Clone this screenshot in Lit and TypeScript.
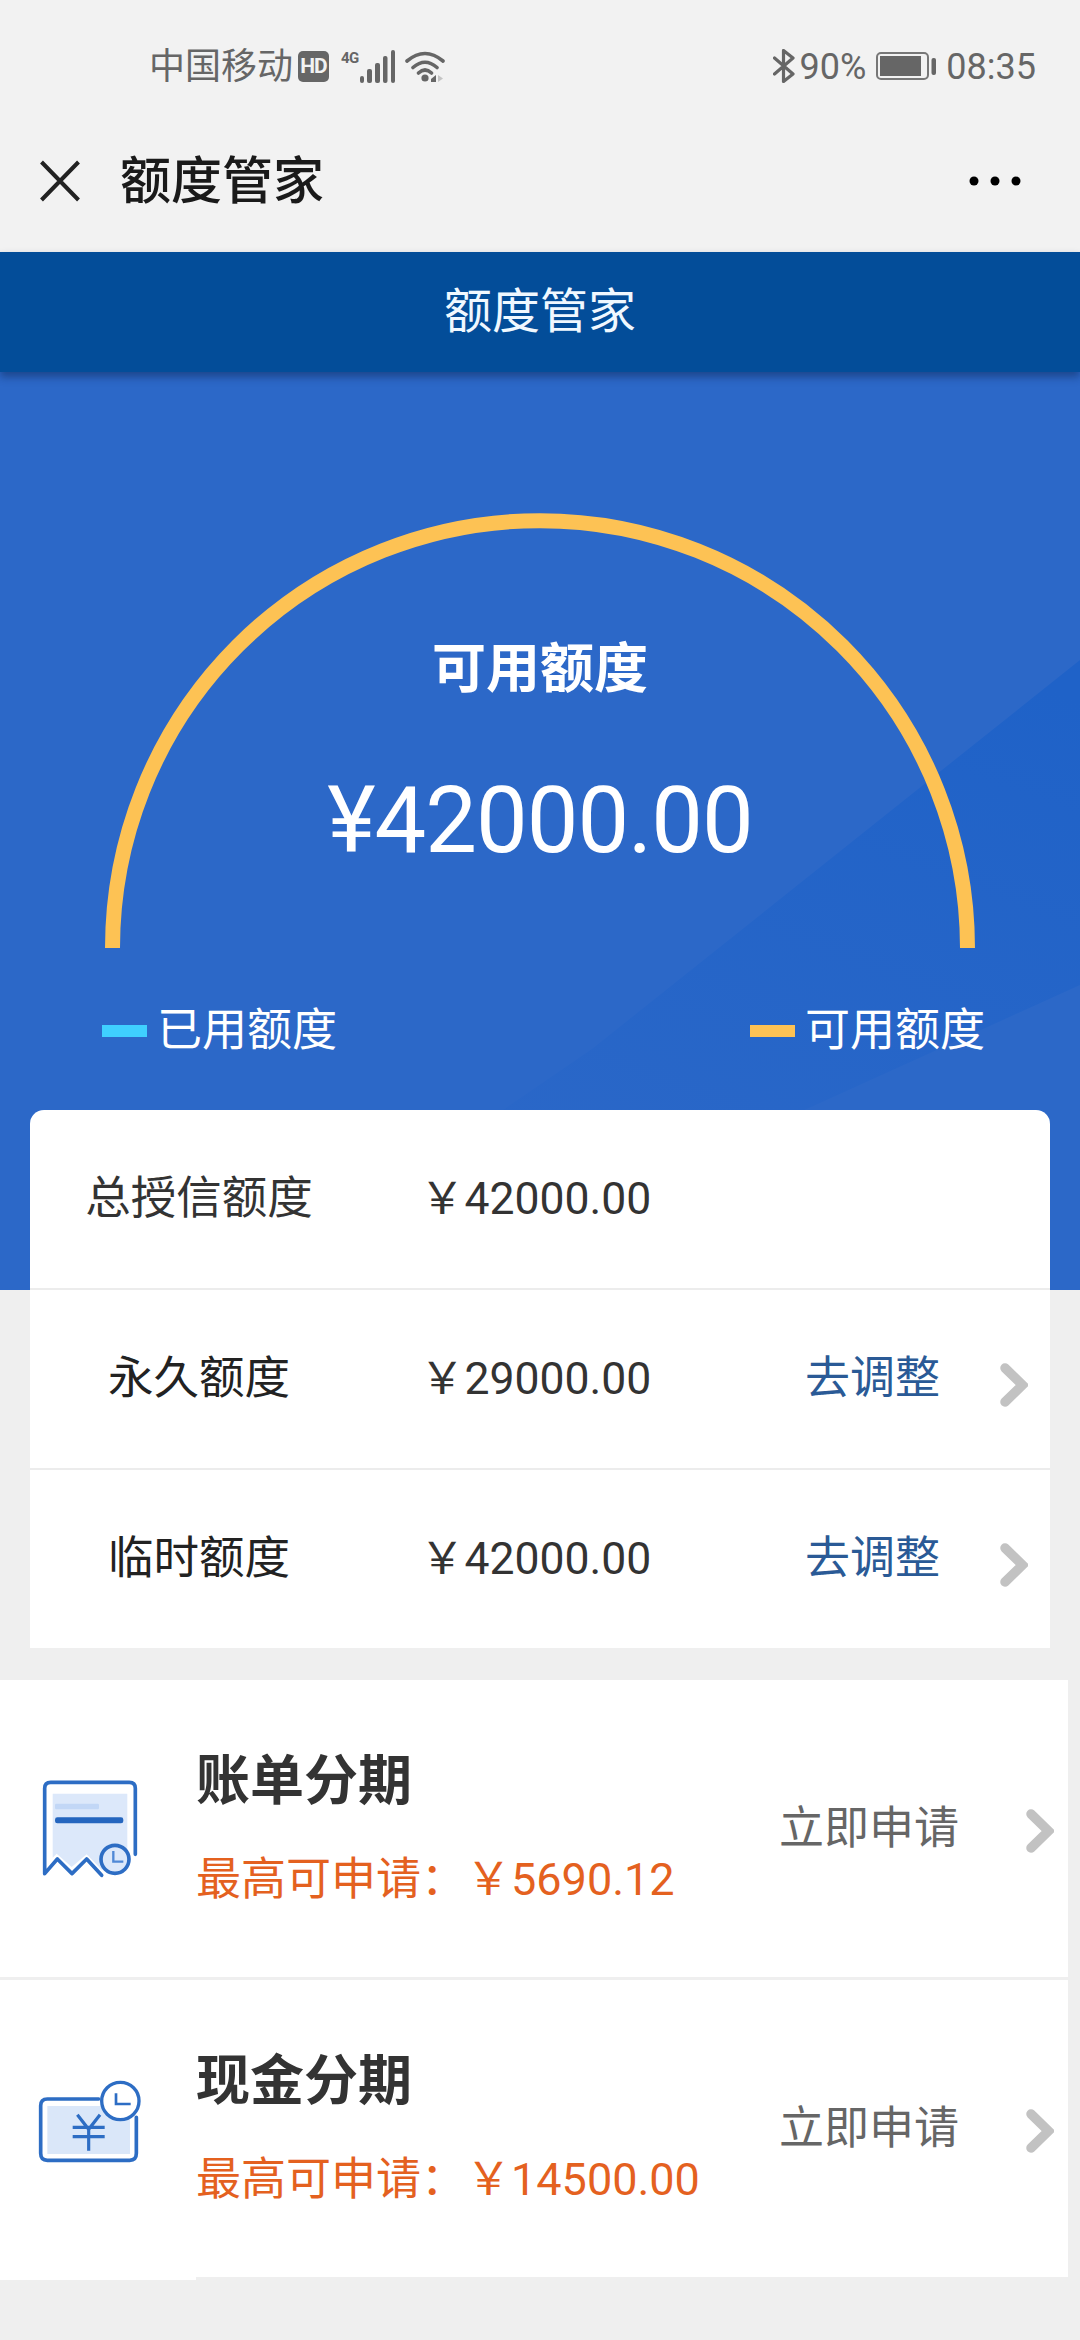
import { LitElement, html, css, svg } from "lit";
import { customElement } from "lit/decorators.js";

const chevron = html`<svg class="chev" viewBox="0 0 28 44" width="28" height="44"><path d="M5 5 L22.500 22 L5 39" fill="none" stroke="#c2c2c2" stroke-width="9.500" stroke-linecap="round" stroke-linejoin="miter"/></svg>`;

const billIcon = html`<svg class="i-bill" viewBox="120 170 300 310" width="100" height="103.3">
  <path d="M158 220 H382 V385 L345 440 L305 448 L260 402 L215 440 L170 400 L158 412 Z" fill="#dce8fa"/>
  <rect x="165" y="250" width="132" height="17" rx="4" fill="#c2d7f6"/>
  <rect x="165" y="291" width="205" height="18" rx="7" fill="#2566bf"/>
  <path d="M406 402 V204 Q406 186 388 186 H152 Q134 186 134 204 V460 L172 416 L216 460 L260 416 L305 465" fill="none" stroke="#2d6dc4" stroke-width="11" stroke-linejoin="round" stroke-linecap="round"/>
  <circle cx="345" cy="417" r="42" fill="#dce8fa" stroke="#2d6dc4" stroke-width="11"/>
  <path d="M340 392 V424 H370" fill="none" stroke="#4f88d6" stroke-width="7"/>
</svg>`;

const cashIcon = html`<svg class="i-cash" viewBox="115 1075 320 255" width="106.7" height="85">
  <rect x="146" y="1156" width="248" height="144" fill="#dae7f9"/>
  <path d="M300 1135 H146 Q126 1135 126 1155 V1298 Q126 1319 146 1319 H393 Q413 1319 413 1298 V1190" fill="none" stroke="#2d6dc4" stroke-width="11" stroke-linecap="round"/>
  <circle cx="365" cy="1141" r="56" fill="#fff" stroke="#2d6dc4" stroke-width="10"/>
  <path d="M352 1118 V1150 H396" fill="none" stroke="#2d6dc4" stroke-width="8"/>
  <path d="M236 1182 L270 1226 L304 1182 M222 1220 H318 M222 1248 H318 M270 1226 V1290" fill="none" stroke="#2d6dc4" stroke-width="9.500"/>
</svg>`;

const signal = svg`<rect x="0" y="26" width="4" height="7" rx="2"/><rect x="7" y="19" width="5" height="14" rx="2"/><rect x="15" y="13" width="5" height="20" rx="2"/><rect x="23" y="6" width="4.500" height="27" rx="2"/><rect x="31" y="0" width="4" height="33" rx="2"/>`;

@customElement("app-root")
export class AppRoot extends LitElement {
  static styles = css`
    :host { display: block; width: 1080px; height: 2340px; background: #efefef; overflow: hidden;
      font-family: Roboto, "Noto Sans CJK SC", sans-serif; color: #333; }
    svg { display: block; flex: none; }

    .top { background: #f2f2f2; height: 252px; }
    .status { height: 132px; display: flex; justify-content: space-between; align-items: center; padding: 0 44px 0 149px; box-sizing: border-box; color: #666; }
    .group { display: flex; align-items: center; }
    .carrier { font-size: 36px; line-height: 44px; width: 144px; white-space: nowrap; margin-top: 2px; }
    .hd { width: 31px; height: 31px; margin-left: 5px; border-radius: 5px; background: #666; color: #f2f2f2; font-size: 21px; font-weight: 700; line-height: 31px; text-align: center; letter-spacing: -1px; }
    .net { width: 19px; height: 33px; margin-left: 12px; font-size: 15px; font-weight: 700; line-height: 17px; letter-spacing: -.5px; }
    .bars { fill: #666; margin-right: 10px; }
    .st-text { font-size: 36px; line-height: 40px; margin-top: 2px; }
    .pct { margin: 2px 10px 0 5px; }
    .time { margin-left: 9px; }

    .nav { height: 120px; padding: 0 59px 22px 40px; box-sizing: border-box; display: flex; align-items: center; color: #1a1a1a; }
    .nav-title { font-size: 51px; line-height: 60px; font-weight: 500; margin: 2px 0 0 40px; flex: 1; }

    .bar { position: relative; z-index: 1; height: 120px; background: #034d99; color: #f0f8ff; box-shadow: 0 5px 8px rgba(10, 30, 70, .45);
      display: flex; align-items: center; justify-content: center; font-size: 48px; font-weight: 400; padding-bottom: 10px; box-sizing: border-box; }

    .hero { position: relative; height: 918px; background: #2c68c8; overflow: hidden; color: #fff; padding-top: 141px; box-sizing: border-box; }
    .decor { position: absolute; inset: 0; clip-path: polygon(1080px 288px, 592px 677px, 500px 740px, 800px 740px, 1080px 613px); background: linear-gradient(200deg, #1f62c8 25%, #2c68c8 82%); }
    .gauge { position: relative; width: 870px; height: 435px; margin: 0 auto; display: grid; }
    .gauge > * { grid-area: 1 / 1; }
    .gauge-text { display: flex; flex-direction: column; align-items: center; padding-top: 122px; box-sizing: border-box; }
    .g-label { font-size: 54px; font-weight: 700; line-height: 70px; }
    .g-amount { font-size: 92px; letter-spacing: -1px; line-height: 110px; margin-top: 61px; }
    .legend { position: relative; display: flex; justify-content: space-between; margin-top: 53px; padding: 0 95px 0 102px; font-size: 45px; line-height: 60px; }
    .leg { display: flex; align-items: center; gap: 10px; }
    .sw { width: 45px; height: 12px; }

    .card { position: relative; margin: -180px 30px 0; background: #fff; border-radius: 14px 14px 0 0; }
    .row { height: 180px; box-sizing: border-box; border-bottom: 2px solid #ececec; display: flex; align-items: center; font-size: 45px; padding-bottom: 10px; }
    .row:last-child { height: 178px; border-bottom: 0; }
    .r-label { width: 338px; text-align: center; color: #222; font-size: 45.500px; }
    .r-label.total { color: #333; }
    .r-val { flex: 1; margin-left: 52px; color: #333; font-size: 44.500px; }
    .r-act { color: #2a5a96; }
    .row .chev { margin: 22px 22px 0 60px; }

    .apply { margin: 32px 12px 0 0; }
    .a-row { display: flex; height: 297px; }
    .a-row + .a-row { margin-top: 3px; height: 300px; }
    .a-icon { width: 196px; background: #fff; display: flex; align-items: center; padding-left: 40px; box-sizing: border-box; }
    .i-cash { margin: 0 0 18px -3px; }
    .a-main { flex: 1; background: #fff; display: flex; align-items: center; padding-right: 14px; }
    .a-row + .a-row .a-main { margin-bottom: 3px; }
    .a-text { flex: 1; align-self: flex-start; padding-top: 66px; }
    .a-title { font-size: 54px; font-weight: 700; line-height: 72px; color: #333; }
    .a-sub { font-size: 45px; line-height: 60px; margin-top: 32px; color: #e4611f; white-space: nowrap; }
    .a-act { font-size: 45px; color: #666; margin-bottom: 8px; }
    .a-main .chev { margin: 5px 0 0 67px; }
  `;

  private row(label: string, value: string, total = false) {
    return html`<div class="row">
      <div class="r-label ${total ? "total" : ""}">${label}</div>
      <div class="r-val">${value}</div>
      ${total ? "" : html`<div class="r-act">去调整</div>${chevron}`}
    </div>`;
  }

  private applyRow(icon: unknown, title: string, sub: string) {
    return html`<div class="a-row">
      <div class="a-icon">${icon}</div>
      <div class="a-main">
        <div class="a-text"><div class="a-title">${title}</div><div class="a-sub">最高可申请：${sub}</div></div>
        <div class="a-act">立即申请</div>${chevron}
      </div>
    </div>`;
  }

  render() {
    return html`
      <div class="top">
        <div class="status">
          <div class="group">
            <div class="carrier">中国移动</div>
            <div class="hd">HD</div>
            <div class="net">4G</div>
            <svg class="bars" viewBox="0 0 35 33" width="35" height="33">${signal}</svg>
            <svg viewBox="0 0 40 33" width="40" height="33">
              <path d="M2 11 Q20 -4 38 11 M8 17.500 Q20 7 32 17.500 M13.500 23 Q20 17 26.500 23" fill="none" stroke="#666" stroke-width="3.600" stroke-linecap="round"/>
              <circle cx="20" cy="28" r="3.600" fill="#666"/>
              <path d="M26 29 L31 25 V32 H26 Z" fill="#666"/><path d="M33 25 L38 28.500 L33 32 Z" fill="#c4c4c4"/>
            </svg>
          </div>
          <div class="group">
            <svg viewBox="0 0 22 34" width="22" height="34"><path d="M1.500 9 L20 25 L10.500 32.500 V1.500 L20 9 L1.500 25" fill="none" stroke="#666" stroke-width="3.200" stroke-linejoin="round" stroke-linecap="round"/></svg>
            <div class="st-text pct">90%</div>
            <svg viewBox="0 0 61 28" width="61" height="28">
              <rect x="1" y="1" width="51" height="26" rx="4" fill="none" stroke="#777" stroke-width="2"/>
              <rect x="4" y="4" width="41" height="20" fill="#666"/>
              <rect x="55.500" y="6" width="4.500" height="17" rx="2" fill="#666"/>
            </svg>
            <div class="st-text time">08:35</div>
          </div>
        </div>
        <div class="nav">
          <svg viewBox="0 0 40 42" width="40" height="42"><path d="M1.500 2 L38.500 40 M38.500 2 L1.500 40" stroke="#222" stroke-width="4"/></svg>
          <div class="nav-title">额度管家</div>
          <svg viewBox="0 0 52 10" width="52" height="10"><circle cx="5" cy="5" r="4.500"/><circle cx="26" cy="5" r="4.500"/><circle cx="47" cy="5" r="4.500"/></svg>
        </div>
      </div>
      <div class="bar">额度管家</div>
      <div class="hero">
        <div class="decor"></div>
        <div class="gauge">
          <svg viewBox="0 0 870 435" width="870" height="435"><path d="M7.500 435 A427.500 427.500 0 0 1 862.500 435" fill="none" stroke="#fdc254" stroke-width="15"/></svg>
          <div class="gauge-text">
            <div class="g-label">可用额度</div>
            <div class="g-amount">¥42000.00</div>
          </div>
        </div>
        <div class="legend">
          <div class="leg"><span class="sw" style="background:#3fd0ff"></span>已用额度</div>
          <div class="leg"><span class="sw" style="background:#fdc254"></span>可用额度</div>
        </div>
      </div>
      <div class="card">
        ${this.row("总授信额度", "￥42000.00", true)}
        ${this.row("永久额度", "￥29000.00")}
        ${this.row("临时额度", "￥42000.00")}
      </div>
      <div class="apply">
        ${this.applyRow(billIcon, "账单分期", "￥5690.12")}
        ${this.applyRow(cashIcon, "现金分期", "￥14500.00")}
      </div>
    `;
  }
}
